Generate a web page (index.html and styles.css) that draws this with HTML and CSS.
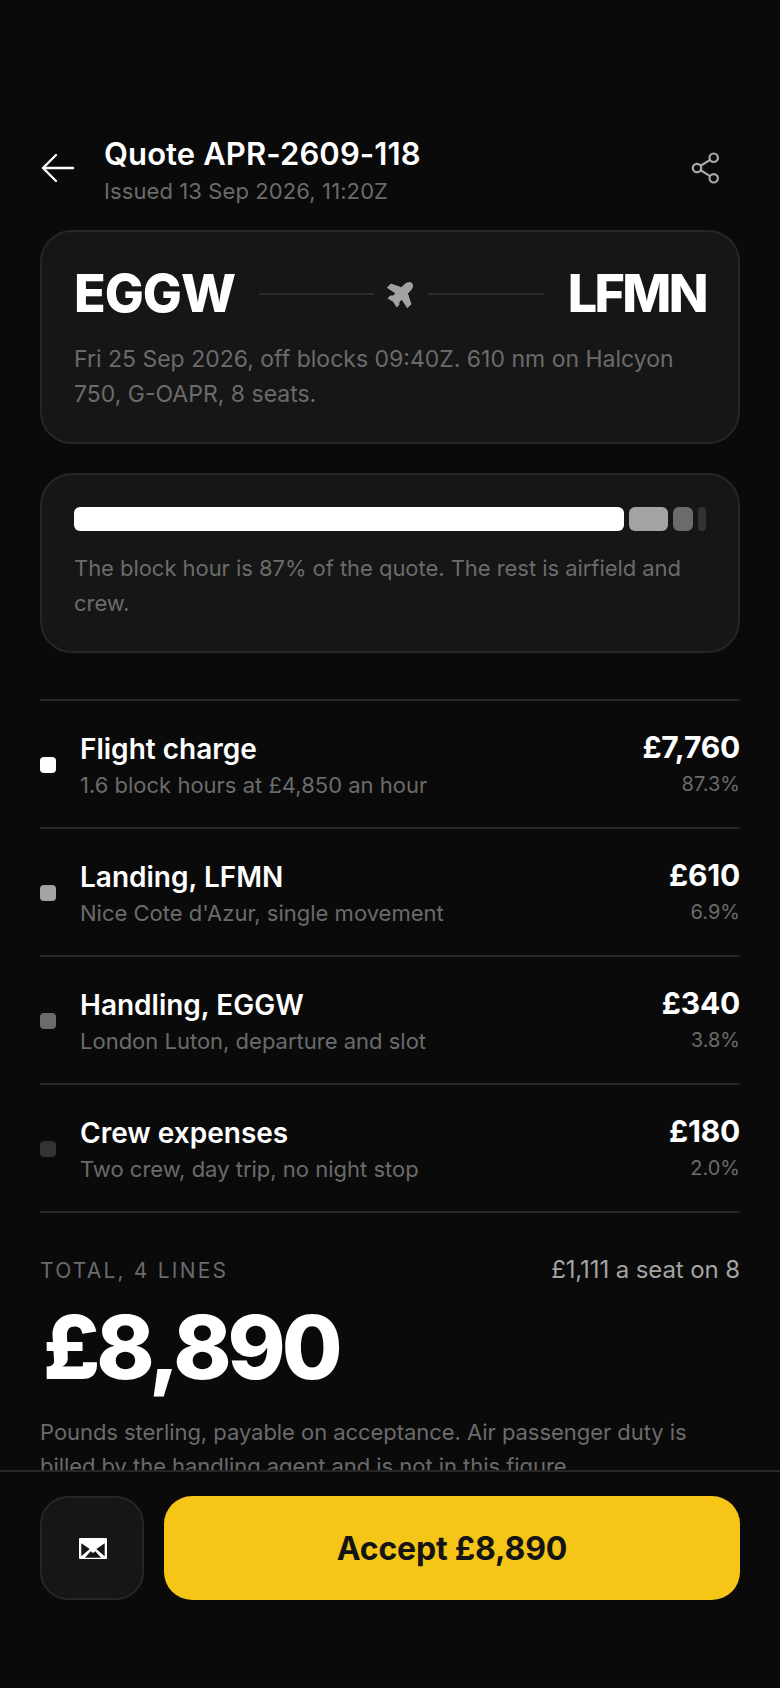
FILE: index.html
```html
<!DOCTYPE html>
<html lang="en">
<head>
<meta charset="utf-8">
<title>Quote APR-2609-118</title>
<link rel="stylesheet" href="styles.css">
</head>
<body>
<div class="app">
  <main class="scroll">
    <header class="head">
      <svg class="back" viewBox="0 0 36 36" width="36" height="36" aria-hidden="true"><path d="M33 18H3M16 5 3 18l13 13"/></svg>
      <div class="head-text">
        <h1 class="title">Quote APR-2609-118</h1>
        <p class="issued">Issued 13 Sep 2026, 11:20Z</p>
      </div>
      <svg class="share" viewBox="0 0 36 36" width="36" height="36" aria-hidden="true"><circle cx="25.7" cy="7.7" r="4.2"/><circle cx="9" cy="18" r="4.2"/><circle cx="25.7" cy="28.3" r="4.2"/><path d="M12.6 15.8 22.1 9.9M12.6 20.2l9.5 5.9"/></svg>
    </header>

    <section class="card">
      <div class="route">
        <span class="code code-from">EGGW</span>
        <span class="track"><i class="rule"></i><svg class="plane" viewBox="-15 -15 30 30" width="30" height="30" aria-hidden="true"><path transform="rotate(45)" d="M0-15C2.5-15 4-12 4-9V-5L14 0V5L4 3V7L6 9V12L0 10.5-6 12V9L-4 7V3L-14 5V0L-4-5V-9C-4-12-2.5-15 0-15Z"/></svg><i class="rule"></i></span>
        <span class="code code-to">LFMN</span>
      </div>
      <p class="note">Fri 25 Sep 2026, off blocks 09:40Z. 610 nm on Halcyon 750, G-OAPR, 8 seats.</p>
    </section>

    <section class="card">
      <div class="bar">
        <i class="seg s1" style="flex-grow:550"></i>
        <i class="seg s2" style="flex-grow:39"></i>
        <i class="seg s3" style="flex-grow:19.5"></i>
        <i class="seg s4" style="flex-grow:8"></i>
      </div>
      <p class="note note-bar">The block hour is 87% of the quote. The rest is airfield and crew.</p>
    </section>

    <ul class="lines">
      <li class="line"><i class="dot s1"></i><div class="line-text"><div class="name">Flight charge</div><div class="desc">1.6 block hours at £4,850 an hour</div></div><div class="line-num"><div class="price">£7,760</div><div class="pct">87.3%</div></div></li>
      <li class="line"><i class="dot s2"></i><div class="line-text"><div class="name">Landing, LFMN</div><div class="desc">Nice Cote d'Azur, single movement</div></div><div class="line-num"><div class="price">£610</div><div class="pct">6.9%</div></div></li>
      <li class="line"><i class="dot s3"></i><div class="line-text"><div class="name">Handling, EGGW</div><div class="desc">London Luton, departure and slot</div></div><div class="line-num"><div class="price">£340</div><div class="pct">3.8%</div></div></li>
      <li class="line"><i class="dot s4"></i><div class="line-text"><div class="name">Crew expenses</div><div class="desc">Two crew, day trip, no night stop</div></div><div class="line-num"><div class="price">£180</div><div class="pct">2.0%</div></div></li>
    </ul>

    <section class="total">
      <div class="total-head"><span class="total-label">TOTAL, 4 LINES</span><span class="per-seat">£1,111 a seat on 8</span></div>
      <div class="amount">£8,890</div>
      <p class="fine">Pounds sterling, payable on acceptance. Air passenger duty is billed by the handling agent and is not in this figure.</p>
    </section>
  </main>

  <footer class="foot">
    <button class="mail" type="button" aria-label="Email"><svg class="envelope" viewBox="0 0 28 21" width="28" height="21" aria-hidden="true"><rect class="env-body" width="28" height="21" rx="1"/><path class="env-cut" d="M2.3 5.3V18.3L10.7 11ZM25.7 5.3V18.3L17.3 11ZM6 19.7 11.7 13.3 14 15 16.3 13.3 22 19.7Z"/></svg></button>
    <button class="accept" type="button">Accept £8,890</button>
  </footer>
</div>
</body>
</html>
```
FILE: styles.css
```css
* { box-sizing: border-box; }
html, body { margin: 0; padding: 0; background: #0a0a0a; }
body { font-family: Inter, "Liberation Sans", sans-serif; color: #fff; }
h1, p, ul { margin: 0; padding: 0; }
i { display: block; }

.app { height: 1688px; width: 780px; display: flex; flex-direction: column; overflow: hidden; }
.scroll { flex: 1; min-height: 0; overflow: hidden; padding: 131px 40px 0; }

.head { display: flex; align-items: center; gap: 28px; padding-right: 16px; height: 74px; margin-bottom: 25px; }
.back { flex: none; fill: none; stroke: #fff; stroke-width: 2.4; stroke-linecap: round; stroke-linejoin: round; }
.head-text { flex: 1; min-width: 0; margin-top: 6px; }
.title { font-size: 31px; line-height: 38px; font-weight: 600; letter-spacing: 0.1px; }
.issued { font-size: 22px; line-height: 34px; letter-spacing: 0.1px; color: #6b6b6b; margin-top: 1px; }
.share { flex: none; fill: none; stroke: #a8a8a8; stroke-width: 2.2; }

.card { background: #161616; border: 2px solid #262626; border-radius: 32px; padding: 32px 32px 30px; margin-bottom: 29px; }
.route { display: flex; align-items: center; gap: 24px; height: 61px; margin-top: -1px; }
.code { font-size: 52px; line-height: 61px; font-weight: 800; }
.code-from { letter-spacing: -1px; }
.code-to { letter-spacing: -2.6px; }
.track { flex: 1; display: flex; align-items: center; gap: 12px; }
.rule { flex: 1; height: 2px; background: #2c2c2c; }
.plane { flex: none; fill: #a3a3a3; stroke: #a3a3a3; stroke-width: 1; stroke-linejoin: round; }
.note { font-size: 23px; line-height: 35px; color: #6b6b6b; margin-top: 18px; }
.note-bar { font-size: 22px; letter-spacing: -0.05px; margin-top: 20px; }
.bar { display: flex; gap: 5px; height: 24px; }
.seg { display: block; flex: 1 1 0; border-radius: 6px; }
.s1 { background: #fff; }
.s2 { background: #a3a3a3; }
.s3 { background: #6b6b6b; }
.s4 { background: #333; }

.lines { list-style: none; border-top: 2px solid #262626; margin-top: 46px; }
.line { display: flex; align-items: center; gap: 24px; height: 128px; border-bottom: 2px solid #262626; }
.dot { flex: none; width: 16px; height: 16px; border-radius: 4px; margin-top: 2px; }
.line-text { flex: 1; min-width: 0; padding-top: 2px; }
.name { font-size: 28px; line-height: 38px; font-weight: 600; }
.desc { font-size: 22px; line-height: 32px; color: #6b6b6b; margin-top: 1px; }
.line-num { text-align: right; }
.price { font-size: 30px; line-height: 38px; font-weight: 700; letter-spacing: -0.2px; }
.pct { font-size: 20px; line-height: 32px; color: #6b6b6b; margin-top: 2px; }

.total { padding-top: 39px; }
.total-head { display: flex; justify-content: space-between; align-items: baseline; height: 38px; padding-top: 3px; }
.total-label { font-size: 21px; letter-spacing: 2.2px; color: #6b6b6b; }
.per-seat { font-size: 24px; letter-spacing: -0.1px; color: #a3a3a3; }
.amount { font-size: 88px; line-height: 110px; font-weight: 800; letter-spacing: -4px; margin-top: 2px; padding-left: 3px; }
.fine { font-size: 22px; line-height: 34px; letter-spacing: -0.05px; color: #6b6b6b; margin-top: 13px; }

.foot { flex: none; height: 218px; background: #0a0a0a; border-top: 2px solid #262626; padding: 24px 40px 0; display: flex; gap: 20px; align-items: flex-start; }
.mail { flex: none; width: 104px; height: 104px; background: #161616; border: 2px solid #262626; border-radius: 28px; display: flex; align-items: center; justify-content: center; padding: 0 0 0 2px; }
.envelope { display: block; }
.env-body { fill: #fff; }
.env-cut { fill: #161616; }
.accept { flex: 1; height: 104px; background: #f5c518; border: 0; border-radius: 28px; color: #141414; font-family: Inter, sans-serif; font-size: 32px; font-weight: 700; letter-spacing: -0.2px; padding: 0; }
```
